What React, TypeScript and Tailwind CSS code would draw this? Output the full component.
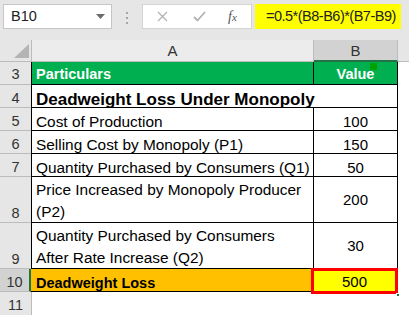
import React from "react";

const font = { fontFamily: '"Liberation Sans", Arial, sans-serif' };

function RowHead({ n, h, last }: { n: string; h: string; last?: boolean }) {
  return (
    <div
      className={`w-[31px] shrink-0 flex items-end justify-center text-[14.5px] leading-[16px] text-[#333] bg-[#e6e6e6] border-b ${last ? "border-[#e6e6e6]" : "border-[#bcbcbc]"} ${h}`}
    >
      <span className="mb-[1px]">{n}</span>
    </div>
  );
}

type RowProps = {
  n: string;
  h: string;
  a: React.ReactNode;
  b?: React.ReactNode;
  multi?: boolean;
};

function Row({ n, h, a, b, multi }: RowProps) {
  return (
    <div className={`flex ${h}`}>
      <RowHead n={n} h={h} />
      <div
        className={`w-[283px] shrink-0 border-l border-r border-b border-black flex items-end pl-[4px] text-[15.4px] text-black whitespace-nowrap ${multi ? "leading-[22px]" : "leading-[16px]"}`}
      >
        {a}
      </div>
      <div
        className={`w-[84px] shrink-0 border-r border-b border-black flex justify-center text-[15px] text-black ${multi ? "items-center pt-[2px]" : "items-end leading-[16px]"}`}
      >
        {b}
      </div>
      <div className="flex-1 bg-white" />
    </div>
  );
}

export default function App() {
  return (
    <div className="w-[409px] h-[315px] overflow-hidden bg-white relative" style={font}>
      {/* toolbar */}
      <div className="h-[40px] bg-[#e6e6e6] flex items-start pt-[4px]">
        <div className="ml-[3px] w-[109px] h-[25px] bg-white border border-[#c6c6c6] flex items-center justify-between pl-[7px] pr-[6px]">
          <span className="text-[14.5px] text-[#222]">B10</span>
          <svg width="9" height="5" viewBox="0 0 9 5">
            <path d="M0 0 L9 0 L4.5 5 Z" fill="#6b6b6b" />
          </svg>
        </div>
        <div className="ml-[14px] mt-[8px] flex flex-col gap-[3px]">
          <div className="w-[2px] h-[2px] bg-[#a6a6a6]" />
          <div className="w-[2px] h-[2px] bg-[#a6a6a6]" />
          <div className="w-[2px] h-[2px] bg-[#a6a6a6]" />
        </div>
        <div className="ml-[14px] w-[110px] h-[25px] bg-white border border-[#d4d4d4] flex items-center">
          <svg className="ml-[14px]" width="11" height="11" viewBox="0 0 11 11">
            <path d="M1 1 L10 10 M10 1 L1 10" stroke="#b3b3b3" strokeWidth="1.3" />
          </svg>
          <svg className="ml-[25px]" width="13" height="11" viewBox="0 0 13 11">
            <path d="M1 6 L4.5 9.5 L12 1" stroke="#b3b3b3" strokeWidth="1.8" fill="none" />
          </svg>
          <span
            className="ml-[22px] text-[14px] italic text-[#555]"
            style={{ fontFamily: '"Liberation Serif", "Times New Roman", serif' }}
          >
            f<span className="text-[11px]">x</span>
          </span>
        </div>
        <div className="ml-[3px] w-[146px] h-[25px] bg-[#ffff00] flex items-center pl-[11px] text-[14.5px] tracking-[-0.5px] whitespace-nowrap text-[#222]">
          =0.5*(B8-B6)*(B7-B9)
        </div>
      </div>

      {/* column headers */}
      <div className="flex h-[22px]">
        <div className="w-[32px] shrink-0 bg-[#e6e6e6] border-r border-b border-[#bcbcbc] relative">
          <svg className="absolute right-[2px] bottom-[3px]" width="15" height="14" viewBox="0 0 15 14">
            <path d="M15 0 L15 14 L0 14 Z" fill="#b4b4b4" />
          </svg>
        </div>
        <div className="w-[282px] shrink-0 bg-[#ececec] border-r border-b border-[#bcbcbc] flex items-center justify-center pt-[2px] text-[15px] text-[#333]">
          A
        </div>
        <div className="w-[84px] shrink-0 bg-[#d2d2d2] border-r border-[#bcbcbc] border-b-2 border-b-[#217346] flex items-center justify-center pt-[2px] text-[15px] text-[#333]">
          B
        </div>
        <div className="flex-1 bg-[#e6e6e6] border-b border-[#bcbcbc]" />
      </div>

      {/* row 3 */}
      <div className="flex h-[23px]">
        <div className="w-[31px] shrink-0 flex items-center justify-center pt-[3px] text-[14.5px] text-[#333] bg-[#e6e6e6] border-b border-[#bcbcbc]">
          3
        </div>
        <div className="w-[283px] shrink-0 border-l border-r border-b border-black bg-[#00b050] flex items-center pl-[4px] pt-[3px] text-[14.5px] font-bold text-white">
          Particulars
        </div>
        <div className="w-[84px] shrink-0 border-r border-b border-black bg-[#00b050] flex items-center justify-center pt-[3px] text-[14.5px] font-bold text-white relative">
          Value
          <div className="absolute left-[56px] top-[1px] w-[7px] h-[7px] bg-[#00a200]" />
        </div>
        <div className="flex-1 bg-white" />
      </div>

      {/* row 4 merged */}
      <div className="flex h-[23px]">
        <RowHead n="4" h="h-[23px]" />
        <div className="w-[367px] shrink-0 border-l border-r border-b border-black flex items-end pl-[4px] text-[17px] leading-[18px] font-bold text-black whitespace-nowrap">
          <span className="-mb-[2px]">Deadweight Loss Under Monopoly</span>
        </div>
        <div className="flex-1 bg-white" />
      </div>

      <Row n="5" h="h-[23px]" a="Cost of Production" b="100" />
      <Row n="6" h="h-[23px]" a="Selling Cost by Monopoly (P1)" b="150" />
      <Row n="7" h="h-[23px]" a="Quantity Purchased by Consumers (Q1)" b="50" />
      <Row
        n="8"
        h="h-[46px]"
        multi
        a={
          <div className="-mb-[1px]">
            <div>Price Increased by Monopoly Producer</div>
            <div>(P2)</div>
          </div>
        }
        b="200"
      />
      <Row
        n="9"
        h="h-[46px]"
        multi
        a={
          <div className="-mb-[1px]">
            <div>Quantity Purchased by Consumers</div>
            <div>After Rate Increase (Q2)</div>
          </div>
        }
        b="30"
      />

      {/* row 10 */}
      <div className="flex h-[23px]">
        <div className="w-[31px] shrink-0 flex items-end justify-center text-[14.5px] leading-[16px] text-[#333] bg-[#d2d2d2] border-b border-[#bcbcbc] border-r-2 border-r-[#217346]">
          <span className="mb-[1px]">10</span>
        </div>
        <div className="w-[282px] shrink-0 border-r border-b border-black bg-[#ffc000] flex items-end pl-[5px] text-[14.5px] leading-[18px] font-bold text-black">
          <span className="-mb-[1px]">Deadweight Loss</span>
        </div>
        <div className="w-[84px] shrink-0 border-r border-b border-black bg-[#ffff00] flex items-center justify-center pt-[4px] text-[15px] text-black relative">
          500
          <div className="absolute -left-[2px] -top-[1px] -right-[2px] -bottom-[3px] border-[3px] border-[#ff0000]" />
          <div className="absolute -right-[4px] -bottom-[6px] w-[4px] h-[4px] bg-[#217346] border border-white" />
        </div>
        <div className="flex-1 bg-white" />
      </div>

      {/* row 11 */}
      <div className="flex h-[23px]">
        <RowHead n="11" h="h-[23px]" last />
        <div className="flex-1 bg-white border-l border-[#bcbcbc]" />
      </div>
    </div>
  );
}
